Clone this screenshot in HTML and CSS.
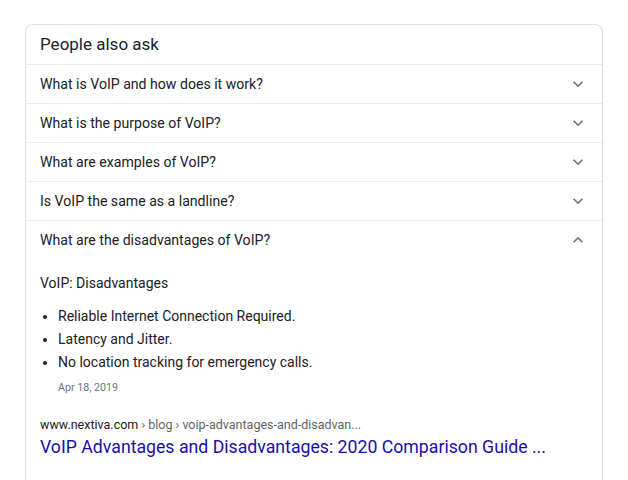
FILE: index.html
```html
<!DOCTYPE html>
<html>
<head>
<meta charset="utf-8">
<link rel="stylesheet" href="styles.css">
</head>
<body>
<div class="card">
  <div class="head">People also ask</div>
  <div class="row"><span>What is VoIP and how does it work?</span><svg class="chev" viewBox="0 0 24 24"><path d="M7.41 8.59 12 13.17l4.59-4.58L18 10l-6 6-6-6z"/></svg></div>
  <div class="row"><span>What is the purpose of VoIP?</span><svg class="chev" viewBox="0 0 24 24"><path d="M7.41 8.59 12 13.17l4.59-4.58L18 10l-6 6-6-6z"/></svg></div>
  <div class="row"><span>What are examples of VoIP?</span><svg class="chev" viewBox="0 0 24 24"><path d="M7.41 8.59 12 13.17l4.59-4.58L18 10l-6 6-6-6z"/></svg></div>
  <div class="row"><span>Is VoIP the same as a landline?</span><svg class="chev" viewBox="0 0 24 24"><path d="M7.41 8.59 12 13.17l4.59-4.58L18 10l-6 6-6-6z"/></svg></div>
  <div class="row open"><span>What are the disadvantages of VoIP?</span><svg class="chev" viewBox="0 0 24 24"><path d="M7.41 15.41 12 10.83l4.59 4.58L18 14l-6-6-6 6z"/></svg></div>
  <div class="answer">
    <div class="ans-title">VoIP: Disadvantages</div>
    <ul class="list">
      <li>Reliable Internet Connection Required.</li>
      <li>Latency and Jitter.</li>
      <li>No location tracking for emergency calls.</li>
    </ul>
    <div class="date">Apr 18, 2019</div>
    <div class="cite"><span class="host">www.nextiva.com</span> › blog › voip-advantages-and-disadvan...</div>
    <a class="title" href="#">VoIP Advantages and Disadvantages: 2020 Comparison Guide ...</a>
  </div>
</div>
</body>
</html>
```
FILE: styles.css
```css
html, body {
  margin: 0;
  background: #fff;
}
body {
  padding: 24px 0 0 25px;
  font-family: Roboto, "Liberation Sans", Arial, sans-serif;
  color: #202124;
}
.card {
  width: 578px;
  height: 480px;
  border: 1px solid #dfe1e5;
  border-bottom: none;
  border-radius: 8px 8px 0 0;
  box-sizing: border-box;
}
.head {
  height: 39px;
  line-height: 38px;
  font-size: 17px;
  padding-left: 14px;
  color: #202124;
}
.row {
  display: flex;
  align-items: center;
  justify-content: space-between;
  height: 39px;
  border-top: 1px solid #ebebeb;
  box-sizing: border-box;
  padding: 0 14px 0 14px;
  font-size: 14.1px;
  color: #202124;
}
.chev {
  width: 20px;
  height: 20px;
  fill: #70757a;
}
.answer {
  padding: 14px 14px 0 14px;
}
.ans-title {
  font-size: 14px;
  line-height: 20px;
}
.list {
  margin: 12px 0 0 0;
  padding-left: 18px;
  font-size: 14px;
  line-height: 23px;
}
.date {
  font-size: 10.7px;
  color: #70757a;
  line-height: 16px;
  margin: 6px 0 0 18px;
}
.cite {
  margin-top: 21px;
  font-size: 12.5px;
  line-height: 16px;
  color: #5f6368;
}
.host {
  color: #202124;
}
.title {
  display: block;
  margin-top: 2px;
  font-size: 17.7px;
  line-height: 24px;
  color: #1a0dab;
  text-decoration: none;
}
```
